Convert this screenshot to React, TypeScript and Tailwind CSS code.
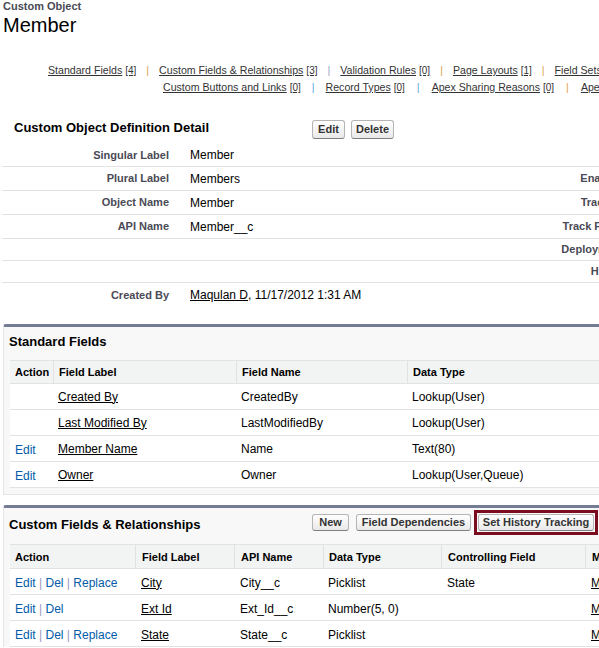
import React from "react";

const Sep = ({ c }: { c: string }) => (
  <span className={`mx-[10px] ${c}`}>|</span>
);

const TopLink = ({ t, n }: { t: string; n: string }) => (
  <>
    <span className="underline text-[#333]">{t}</span>
    <span className="ml-[3px] text-[10px] underline text-[#333]">{n}</span>
  </>
);

const Btn = ({ children, className }: { children: React.ReactNode; className: string }) => (
  <span
    className={`inline-flex items-center justify-center h-[17px] border border-[#b5b5b5] border-b-[#7f7f7f] rounded-[3px] bg-gradient-to-b from-white to-[#e9e9e9] text-[11px] font-bold text-[#333] leading-none ${className}`}
  >
    {children}
  </span>
);

const Link = ({ children }: { children: React.ReactNode }) => (
  <span className="underline text-black">{children}</span>
);

const Act = ({ items }: { items: string[] }) => (
  <span className="text-[#015ba7]">
    {items.map((it, i) => (
      <React.Fragment key={i}>
        {i > 0 && <span className="text-[#9a9ac0]"> | </span>}
        {it}
      </React.Fragment>
    ))}
  </span>
);

export default function App() {
  const detail = [
    { l: "Singular Label", v: "Member", r: "", h: "h-[23px]" },
    { l: "Plural Label", v: "Members", r: "Enable Reports", h: "h-[24px]" },
    { l: "Object Name", v: "Member", r: "Track Activities", h: "h-[24px]" },
    { l: "API Name", v: "Member__c", r: "Track Field History", h: "h-[24px]" },
    { l: "", v: "", r: "Deployment Status", h: "h-[22px]" },
    { l: "", v: "", r: "Help Settings", h: "h-[22px]" },
  ];

  const std = [
    { a: "", l: "Created By", n: "CreatedBy", t: "Lookup(User)" },
    { a: "", l: "Last Modified By", n: "LastModifiedBy", t: "Lookup(User)" },
    { a: "Edit", l: "Member Name", n: "Name", t: "Text(80)" },
    { a: "Edit", l: "Owner", n: "Owner", t: "Lookup(User,Queue)" },
  ];

  const custom = [
    { a: ["Edit", "Del", "Replace"], l: "City", api: "City__c", t: "Picklist", c: "State" },
    { a: ["Edit", "Del"], l: "Ext Id", api: "Ext_Id__c", t: "Number(5, 0)", c: "" },
    { a: ["Edit", "Del", "Replace"], l: "State", api: "State__c", t: "Picklist", c: "" },
  ];

  return (
    <div className="w-[599px] h-[648px] overflow-hidden bg-white font-['Liberation_Sans',Arial,sans-serif] text-black">
      {/* Page header */}
      <div className="pl-[3px]">
        <div className="text-[11px] leading-[12px] font-bold text-[#4a4a56]">Custom Object</div>
        <div className="text-[20px] leading-[26px]">Member</div>
      </div>

      {/* Related list links */}
      <div className="mt-[24px] text-[10.6px] whitespace-nowrap">
        <div className="h-[17px] leading-[17px] pl-[48px]">
          <TopLink t="Standard Fields" n="[4]" />
          <Sep c="text-[#e0a050]" />
          <TopLink t="Custom Fields & Relationships" n="[3]" />
          <Sep c="text-[#9aa6c0]" />
          <TopLink t="Validation Rules" n="[0]" />
          <Sep c="text-[#e0a050]" />
          <TopLink t="Page Layouts" n="[1]" />
          <Sep c="text-[#e0a050]" />
          <TopLink t="Field Sets" n="[0]" />
        </div>
        <div className="h-[17px] leading-[17px] pl-[163px]">
          <TopLink t="Custom Buttons and Links" n="[0]" />
          <span className="mx-[11px] text-[#5aa9e0]">|</span>
          <TopLink t="Record Types" n="[0]" />
          <span className="mx-[12px] text-[#5aa9e0]">|</span>
          <TopLink t="Apex Sharing Reasons" n="[0]" />
          <span className="mx-[12px] text-[#e0a050]">|</span>
          <TopLink t="Apex Sharing Recalculation" n="[0]" />
        </div>
      </div>

      {/* Detail section */}
      <div className="mt-[18px]">
        <div className="flex items-center h-[30px] pl-[14px]">
          <div className="w-[298px] pb-[2px] text-[13px] font-bold leading-[16px]">Custom Object Definition Detail</div>
          <div className="flex gap-[6px]">
            <Btn className="w-[33px] h-[19px]">Edit</Btn>
            <Btn className="w-[43px] h-[19px]">Delete</Btn>
          </div>
        </div>
        <div className="ml-[2px] w-[659px]">
          {detail.map((d, i) => (
            <div key={i} className={`flex items-center border-b border-[#e3e3e3] ${d.h}`}>
              <div className="w-[167px] text-right text-[11px] font-bold text-[#4a4a56]">{d.l}</div>
              <div className="ml-[21px] flex-1 text-[12px]">{d.v}</div>
              <div className="w-[200px] text-right text-[11px] font-bold text-[#4a4a56]">{d.r}</div>
            </div>
          ))}
          <div className="flex items-center h-[24px]">
            <div className="w-[167px] text-right text-[11px] font-bold text-[#4a4a56]">Created By</div>
            <div className="ml-[21px] flex-1 text-[12px]">
              <Link>Maqulan D</Link>, 11/17/2012 1:31 AM
            </div>
            <div className="w-[200px]"></div>
          </div>
        </div>
      </div>

      {/* Standard Fields */}
      <div className="mt-[17px] ml-[3px] w-[660px] bg-[#f8f8f8] border-t-[3px] border-t-[#747c94] border-x border-b border-x-[#e3e5e8] border-b-[#e3e5e8] rounded-t-[3px] pb-[6px]">
        <div className="h-[33px] pt-[7px] pl-[5px] text-[13px] leading-[16px] font-bold">Standard Fields</div>
        <div className="ml-[6px] bg-white">
          <div className="grid grid-cols-[43px_183px_171px_1fr] h-[24px] bg-[#f2f3f3] border-y border-[#e0e3e5] text-[11px] font-bold items-stretch">
            <div className="pl-[5px] flex items-center">Action</div>
            <div className="pl-[5px] flex items-center border-l border-[#dfe1e4]">Field Label</div>
            <div className="pl-[5px] flex items-center border-l border-[#dfe1e4]">Field Name</div>
            <div className="pl-[5px] flex items-center border-l border-[#dfe1e4]">Data Type</div>
          </div>
          {std.map((r, i) => (
            <div key={i} className="grid grid-cols-[43px_183px_171px_1fr] h-[26px] border-b border-[#e3e3e3] text-[12px] items-center">
              <div className="pl-[5px] text-[#015ba7] pt-[2px]">{r.a}</div>
              <div className="pl-[5px]"><Link>{r.l}</Link></div>
              <div className="pl-[5px]">{r.n}</div>
              <div className="pl-[5px]">{r.t}</div>
            </div>
          ))}
        </div>
      </div>

      {/* Custom Fields & Relationships */}
      <div className="mt-[10px] ml-[3px] w-[660px] bg-[#f8f8f8] border-t-[3px] border-t-[#747c94] border-x border-x-[#e3e5e8] rounded-t-[3px]">
        <div className="flex items-start h-[36px]">
          <div className="w-[308px] pl-[5px] pt-[9px] text-[13px] leading-[16px] font-bold">Custom Fields &amp; Relationships</div>
          <div className="flex items-center pt-[2px] whitespace-nowrap">
            <Btn className="w-[37px]">New</Btn>
            <Btn className="ml-[7px] w-[115px]">Field Dependencies</Btn>
            <span className="ml-[3px] inline-flex border-[3px] border-[#7b0c1f] p-[1px]">
              <Btn className="w-[116px]">Set History Tracking</Btn>
            </span>
          </div>
        </div>
        <div className="ml-[6px] bg-white">
          <div className="grid grid-cols-[125px_99px_89px_118px_144px_1fr] h-[25px] bg-[#f2f3f3] border-y border-[#e0e3e5] text-[11px] font-bold items-stretch">
            <div className="pl-[5px] flex items-center pt-[1px]">Action</div>
            <div className="pl-[6px] flex items-center pt-[1px] border-l border-[#dfe1e4]">Field Label</div>
            <div className="pl-[6px] flex items-center pt-[1px] border-l border-[#dfe1e4]">API Name</div>
            <div className="pl-[5px] flex items-center pt-[1px] border-l border-[#dfe1e4]">Data Type</div>
            <div className="pl-[6px] flex items-center pt-[1px] border-l border-[#dfe1e4]">Controlling Field</div>
            <div className="pl-[6px] flex items-center pt-[1px] border-l border-[#dfe1e4]">Modified By</div>
          </div>
          {custom.map((r, i) => (
            <div key={i} className="grid grid-cols-[125px_99px_89px_118px_144px_1fr] h-[26px] border-b border-[#e3e3e3] text-[12px] items-center whitespace-nowrap">
              <div className="pl-[5px] pt-[2px]"><Act items={r.a} /></div>
              <div className="pl-[6px] pt-[2px]"><Link>{r.l}</Link></div>
              <div className="pl-[6px] pt-[2px]">{r.api}</div>
              <div className="pl-[5px] pt-[2px]">{r.t}</div>
              <div className="pl-[6px] pt-[2px]">{r.c}</div>
              <div className="pl-[6px] pt-[2px]"><Link>Maqulan D</Link>, 11/17/2012 1:31 AM</div>
            </div>
          ))}
        </div>
      </div>
    </div>
  );
}
